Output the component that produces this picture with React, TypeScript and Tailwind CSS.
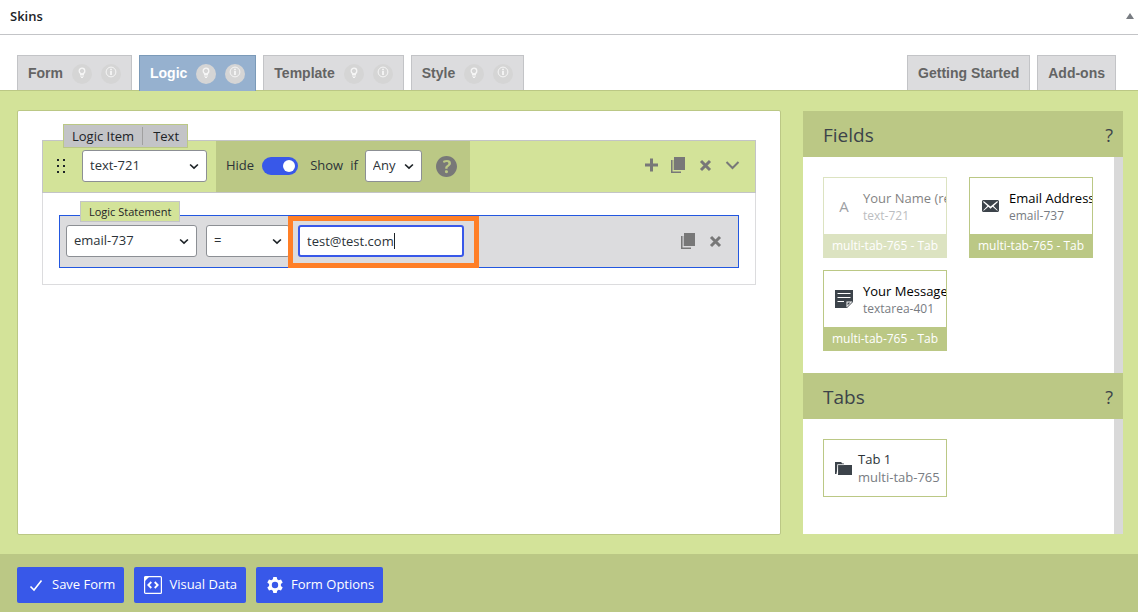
import type { ReactNode } from 'react';

const BulbIcon = () => (
  <svg viewBox="0 0 10 12" className="h-3 w-[10px]" fill="none" stroke="currentColor">
    <circle cx="5" cy="4" r="2.8" strokeWidth="1.3" />
    <path d="M3 7.5h4M3 9h4M4 10.5h2" strokeWidth="1.2" />
  </svg>
);

const InfoIcon = () => (
  <svg viewBox="0 0 12 12" className="h-3 w-3" fill="none" stroke="currentColor">
    <circle cx="6" cy="6" r="4.9" strokeWidth="1" />
    <path d="M6 2.8v1.4M6 5v4" strokeWidth="1.8" />
  </svg>
);

const PlusIcon = () => (
  <svg viewBox="0 0 20 20" className="h-5 w-5" fill="currentColor">
    <path d="M17 8.5v3h-5v5H9v-5H4v-3h5v-5h3v5z" />
  </svg>
);

const CopyIcon = () => (
  <svg viewBox="0 0 20 20" className="h-5 w-5" fill="currentColor">
    <path d="M6 2h11v13H6z" />
    <path d="M3 5h1.5v11.5H13V18H3z" />
    <path d="M4.5 5H6v10H4.5z" opacity="0.3" />
  </svg>
);

const CloseIcon = () => (
  <svg viewBox="0 0 20 20" className="h-5 w-5" fill="none" stroke="currentColor" strokeWidth="3">
    <path d="M6 6l9 9M15 6l-9 9" />
  </svg>
);

const ChevronIcon = () => (
  <svg viewBox="0 0 20 20" className="h-5 w-5" fill="none" stroke="currentColor" strokeWidth="2">
    <path d="M4.5 7l6 6 6-6" />
  </svg>
);

const HelpIcon = () => (
  <svg viewBox="3 3 14 14" className="h-[21px] w-[21px]" fill="currentColor">
    <path d="M17 10c0-3.87-3.14-7-7-7-3.87 0-7 3.13-7 7s3.13 7 7 7c3.86 0 7-3.13 7-7zm-6.3 1.48H9.14v-.43c0-.38.08-.7.24-.98s.46-.57.88-.89c.41-.29.68-.53.81-.71.14-.18.2-.39.2-.62 0-.25-.09-.44-.28-.58-.19-.13-.45-.19-.79-.19-.58 0-1.25.19-2 .57l-.64-1.28c.87-.49 1.8-.74 2.77-.74.81 0 1.45.2 1.92.58.48.39.71.91.71 1.55 0 .43-.09.8-.29 1.11-.19.32-.57.67-1.11 1.06-.38.28-.61.49-.71.63-.1.15-.15.34-.15.57v.35zm-1.47 2.74c-.18-.17-.27-.42-.27-.73 0-.33.08-.58.26-.75s.43-.25.77-.25c.32 0 .57.09.75.26s.27.42.27.74c0 .3-.09.55-.27.72-.18.18-.43.27-.75.27-.33 0-.58-.09-.76-.26z" />
  </svg>
);

const DragIcon = () => (
  <svg viewBox="0 0 10 16" className="h-4 w-[10px]" fill="#1d2327" shapeRendering="crispEdges">
    <path d="M0 1h2v2H0zM6 1h2v2H6zM0 7h2v2H0zM6 7h2v2H6zM0 13h2v2H0zM6 13h2v2H6z" />
  </svg>
);

const LetterIcon = () => <span className="text-[15px] leading-5 font-medium">A</span>;

const EmailIcon = () => (
  <svg viewBox="0 0 20 20" className="h-5 w-5" fill="currentColor">
    <path d="M19 14.5v-9c0-.83-.67-1.5-1.5-1.5H3.49c-.83 0-1.5.67-1.5 1.5v9c0 .83.67 1.5 1.5 1.5H17.5c.83 0 1.5-.67 1.5-1.5zm-1.31-9.11c.33.33.15.67-.03.84L13.6 9.95l3.9 4.06c.12.14.2.36.06.51-.13.16-.43.15-.56.05l-4.37-3.73-2.14 1.95-2.13-1.95-4.37 3.73c-.13.1-.43.11-.56-.05-.14-.15-.06-.37.06-.51l3.9-4.06-4.06-3.72c-.18-.17-.36-.51-.03-.84s.67-.17.95.07l6.24 5.04 6.25-5.04c.28-.24.62-.4.95-.07z" />
  </svg>
);

const NoteIcon = () => (
  <svg viewBox="0 0 20 20" className="h-5 w-5">
    <path d="M1 1h18v12l-6 6H1z" fill="currentColor" />
    <path d="M3.5 4.5h13M3.5 8.5h13M3.5 12.5h6.5" stroke="#fff" strokeWidth="1" />
    <path d="M12.5 18.5v-6h6z" fill="#fff" />
    <path d="M13.5 16.5v-3h3z" fill="currentColor" />
  </svg>
);

const FolderIcon = () => (
  <svg viewBox="0 0 20 20" className="h-5 w-5" fill="currentColor">
    <path d="M2 4h6l1.5 1.5H11V7H5l-1.5 9H2z" />
    <path d="M5 7h14v10H5z" />
    <path d="M4.6 16V6.6H11" stroke="#fff" strokeWidth="0.8" fill="none" />
  </svg>
);

const CheckIcon = () => (
  <svg viewBox="0 0 20 20" className="h-5 w-5" fill="none" stroke="currentColor" strokeWidth="1.6">
    <path d="M4.5 11.5l3.5 3.5L15.5 5.5" />
  </svg>
);

const CodeIcon = () => (
  <svg viewBox="0 0 20 20" className="h-5 w-5" fill="none" stroke="currentColor">
    <rect x="1.6" y="1.6" width="16.8" height="16.8" rx="1" strokeWidth="1.2" />
    <path d="M1.5 1.5h5l-5 5z" fill="currentColor" stroke="none" />
    <path d="M8.3 7L5.3 10l3 3M11.7 7l3 3-3 3" strokeWidth="1.8" />
  </svg>
);

const GearIcon = () => (
  <svg viewBox="0 0 20 20" className="h-5 w-5" fill="currentColor">
    <path
      fillRule="evenodd"
      d="M8.3 2h3.4l.5 2.3 1.5.9 2.3-.8 1.7 3-1.8 1.6v2l1.8 1.6-1.7 3-2.3-.8-1.5.9-.5 2.3H8.3l-.5-2.3-1.5-.9-2.3.8-1.7-3L4.1 11V9L2.3 7.4l1.7-3 2.3.8 1.5-.9zM10 6.8a3.2 3.2 0 100 6.4 3.2 3.2 0 000-6.4z"
    />
  </svg>
);

const Tab = ({ label, active }: { label: string; active?: boolean }) => (
  <div
    className={
      active
        ? 'z-10 -mb-px flex items-start gap-[9px] border border-b-0 border-[#7b9ab8] bg-[#96b1cf] px-[10px] pt-2 pb-[7px] text-white'
        : 'flex items-start gap-[9px] border border-b-0 border-[#c3c4c7] bg-[#dcdcde] px-[10px] pt-2 pb-[6px] text-[#646464]'
    }
  >
    <button type="button" className="leading-[18px] font-bold">
      {label}
    </button>
    <button
      type="button"
      aria-label={`${label} tips`}
      className="flex h-5 w-5 justify-center rounded-full bg-[#d5d5d5] pt-[3px] text-[#f6f6f6]"
    >
      <BulbIcon />
    </button>
    <button
      type="button"
      aria-label={`${label} info`}
      className="flex h-5 w-5 justify-center rounded-full bg-[#d5d5d5] pt-[2px] text-[#f6f6f6]"
    >
      <InfoIcon />
    </button>
  </div>
);

const LinkTab = ({ label }: { label: string }) => (
  <a
    href="#"
    className="border border-b-0 border-[#c3c4c7] bg-[#dcdcde] px-[10px] pt-2 pb-2 leading-[18px] font-bold text-[#646464]"
  >
    {label}
  </a>
);

interface SelectProps {
  label: string;
  options: string[];
  className: string;
}

const Select = ({ label, options, className }: SelectProps) => (
  <div className={`relative shrink-0 ${className}`}>
    <select
      aria-label={label}
      className="h-8 w-full appearance-none rounded-[3px] border border-[#8c8f94] bg-white pr-5 pl-[7px] text-[13px] text-[#2c3338]"
    >
      {options.map((option) => (
        <option key={option}>{option}</option>
      ))}
    </select>
    <svg
      viewBox="0 0 20 20"
      className="pointer-events-none absolute top-[10px] right-[7px] h-3 w-3"
      fill="none"
      stroke="#1d2327"
      strokeWidth="2.8"
    >
      <path d="M3.5 7.5l6.5 6 6.5-6" />
    </svg>
  </div>
);

const IconButton = ({ label, children }: { label: string; children: ReactNode }) => (
  <button type="button" aria-label={label} className="h-5 w-5 text-[#787878]">
    {children}
  </button>
);

interface FieldCardProps {
  title: string;
  name: string;
  tab: string;
  icon: ReactNode;
  used?: boolean;
}

const FieldCard = ({ title, name, tab, icon, used }: FieldCardProps) => (
  <div
    className={`w-[124px] overflow-hidden border border-[#bbc885] bg-white whitespace-nowrap ${used ? 'opacity-50' : ''}`}
  >
    <div className="flex h-14 items-center gap-[9px] pl-[10px]">
      <span className="flex w-5 shrink-0 justify-center text-[#3c434a]">{icon}</span>
      <div>
        <div className="text-[13px] leading-[18px] text-black">{title}</div>
        <div className="text-[12px] leading-[17px] text-[#787c82]">{name}</div>
      </div>
    </div>
    <div className="bg-[#bbc885] text-center text-[12px] leading-[23px] text-white">{tab}</div>
  </div>
);

const SectionHeader = ({ title }: { title: string }) => (
  <div className="flex h-[46px] items-center justify-between bg-[#bbc885] pt-[2px] pr-[10px] pl-5 text-[#3c434a]">
    <h3 className="text-[19px] leading-6">{title}</h3>
    <button type="button" aria-label={`${title} help`} className="text-[18px] leading-6">
      ?
    </button>
  </div>
);

const ActionButton = ({ label, icon }: { label: string; icon: ReactNode }) => (
  <button
    type="button"
    className="flex h-9 items-center gap-[6px] rounded-[2px] bg-[#3858e9] px-[9px] text-[13px] text-white"
  >
    {icon}
    {label}
  </button>
);

const LogicStatement = () => (
  <div className="relative mx-4 flex items-start border border-[#2257e0] bg-[#dcdcde] px-[6px] pt-[9px] pb-[10px]">
    <div className="absolute -top-[15px] left-5 border border-[#c3c4c7] bg-[#d3e399] px-2 text-[11px] leading-[19px] text-[#1d2327]">
      Logic Statement
    </div>
    <Select label="Field" options={['email-737']} className="w-[131px]" />
    <Select label="Operator" options={['=']} className="ml-[9px] w-[84px]" />
    <div className="relative ml-2 w-[166px]">
      <input
        type="text"
        aria-label="Value"
        defaultValue="test@test.com"
        className="h-8 w-full rounded-[3px] border-2 border-[#3858e9] bg-white px-[7px] text-[13px] text-[#2c3338] outline-none"
      />
      <span className="absolute top-2 left-24 h-4 w-px bg-[#1d2327]" />
      <div className="pointer-events-none absolute -top-[9px] -right-[15px] -bottom-[11px] -left-[10px] border-5 border-[#ff7f27]" />
    </div>
    <div className="ml-auto flex gap-[7px] pt-[6px] pr-[7px]">
      <IconButton label="Duplicate statement">
        <CopyIcon />
      </IconButton>
      <IconButton label="Remove statement">
        <CloseIcon />
      </IconButton>
    </div>
  </div>
);

const LogicItem = () => (
  <div className="relative border border-[#dcdcde] pb-4">
    <div className="absolute -top-[17px] left-5 z-10 flex border border-[#bbc885] bg-[#c3c4c7] py-[2px] text-[13px] leading-[18px] text-[#1d2327]">
      <span className="px-2 font-medium">Logic Item</span>
      <span className="border-l border-[#a0a0a0] pr-2 pl-[10px]">Text</span>
    </div>
    <div className="-mx-px -mt-px flex h-[53px] items-stretch border border-[#c3c4c7] bg-[#d3e399]">
      <div className="flex items-center gap-[15px] pr-[9px] pb-px pl-[14px]">
        <DragIcon />
        <Select label="Logic field" options={['text-721']} className="w-[125px]" />
      </div>
      <div className="flex items-center bg-[#bbc885] pr-[13px] pb-px pl-[10px] text-[13px] text-[#2c3338]">
        <label className="flex items-center gap-2">
          Hide
          <input
            type="checkbox"
            role="switch"
            defaultChecked
            className="mr-1 flex h-[18px] w-9 appearance-none items-center rounded-full bg-[#3858e9] px-[3px] before:h-3 before:w-3 before:rounded-full before:bg-white checked:justify-end"
          />
          Show
        </label>
        <span className="mr-[7px] ml-[7px]">if</span>
        <Select label="Match" options={['Any', 'All']} className="w-[57px]" />
        <button type="button" aria-label="Logic help" className="ml-[14px] text-[#787878]">
          <HelpIcon />
        </button>
      </div>
      <div className="ml-auto flex items-center gap-[7px] pr-[13px] pb-[3px]">
        <IconButton label="Add statement">
          <PlusIcon />
        </IconButton>
        <IconButton label="Duplicate item">
          <CopyIcon />
        </IconButton>
        <IconButton label="Remove item">
          <CloseIcon />
        </IconButton>
        <IconButton label="Collapse item">
          <ChevronIcon />
        </IconButton>
      </div>
    </div>
    <div className="pt-[22px]">
      <LogicStatement />
    </div>
  </div>
);

const App = () => {
  return (
    <div className="flex min-h-screen flex-col bg-white font-['Open_Sans',sans-serif] text-[#1d2327]">
      <header className="flex h-[35px] items-center justify-between border-b border-[#c3c4c7] pr-1 pb-[2px] pl-[10px]">
        <h2 className="text-[13px] leading-5 font-semibold">Skins</h2>
        <button type="button" aria-label="Toggle panel" className="text-[#787c82]">
          <svg viewBox="0 0 8 6" className="h-[6px] w-2" fill="currentColor">
            <path d="M4 0l4 6H0z" />
          </svg>
        </button>
      </header>

      <nav className="flex items-end gap-[7px] pt-5 pr-[22px] pl-[17px] font-['Liberation_Sans',Arial,sans-serif] text-[14px]">
        <Tab label="Form" />
        <Tab label="Logic" active />
        <Tab label="Template" />
        <Tab label="Style" />
        <div className="ml-auto flex gap-[7px]">
          <LinkTab label="Getting Started" />
          <LinkTab label="Add-ons" />
        </div>
      </nav>

      <main className="flex flex-1 gap-[22px] border-t border-[#bbc885] bg-[#d3e399] pt-[19px] pr-[15px] pb-[19px] pl-[17px]">
        <section className="flex-1 rounded-[2px] border border-[#bbc885] bg-white px-6 pt-[29px]">
          <LogicItem />
        </section>

        <aside className="flex w-80 shrink-0 flex-col pt-px pb-px">
          <SectionHeader title="Fields" />
          <div className="flex h-[216px] bg-white">
            <div className="flex flex-1 flex-wrap content-start gap-x-[22px] gap-y-3 pt-5 pl-5">
              <FieldCard title="Your Name (required)" name="text-721" tab="multi-tab-765 - Tab" icon={<LetterIcon />} used />
              <FieldCard title="Email Address" name="email-737" tab="multi-tab-765 - Tab" icon={<EmailIcon />} />
              <FieldCard title="Your Message" name="textarea-401" tab="multi-tab-765 - Tab" icon={<NoteIcon />} />
            </div>
            <div className="w-[9px] bg-[#d9d9d9]" />
          </div>
          <SectionHeader title="Tabs" />
          <div className="flex flex-1 bg-white">
            <div className="flex-1 pt-5 pl-5">
              <div className="flex h-[58px] w-[124px] items-center gap-[5px] border border-[#bbc885] pl-[9px] whitespace-nowrap">
                <span className="shrink-0 text-[#3c434a]">
                  <FolderIcon />
                </span>
                <div className="text-[13px] leading-[18px]">
                  <div className="text-[#2c3338]">Tab 1</div>
                  <div className="text-[#787c82]">multi-tab-765</div>
                </div>
              </div>
            </div>
            <div className="w-[9px] bg-[#d9d9d9]" />
          </div>
        </aside>
      </main>

      <footer className="flex gap-[10px] bg-[#bbc885] px-[17px] pt-[13px] pb-[9px]">
        <ActionButton label="Save Form" icon={<CheckIcon />} />
        <ActionButton label="Visual Data" icon={<CodeIcon />} />
        <ActionButton label="Form Options" icon={<GearIcon />} />
      </footer>
    </div>
  );
};

export default App;
